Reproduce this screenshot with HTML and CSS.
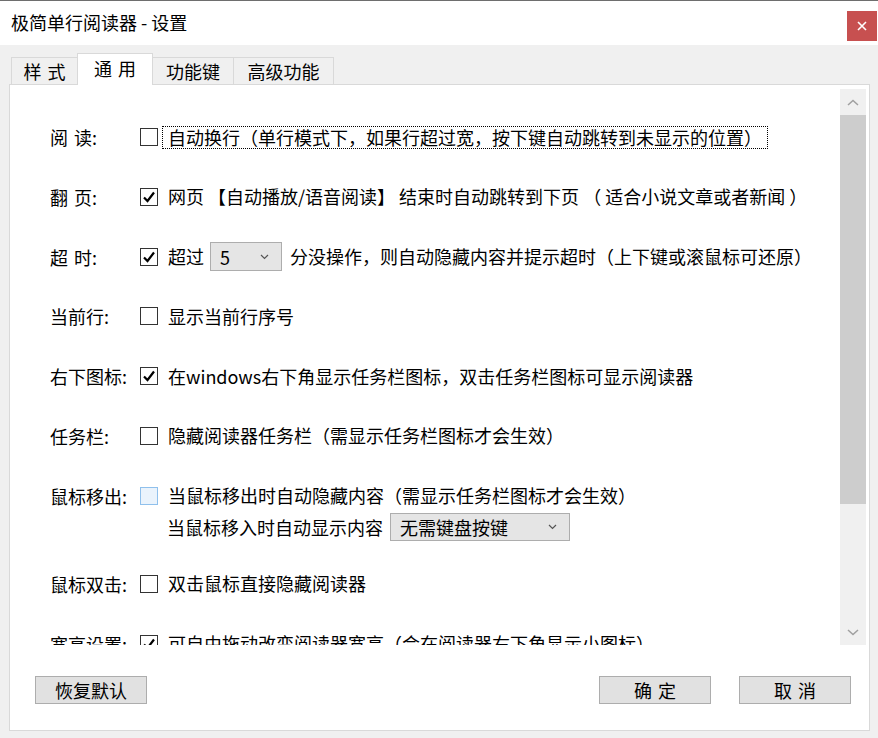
FILE: index.html
```html
<!DOCTYPE html>
<html lang="zh-CN">
<head>
    <meta charset="UTF-8">
    <meta name="viewport" content="width=device-width, initial-scale=1.0">
    <title>极简单行阅读器 - 设置</title>
    <link rel="stylesheet" href="styles.css">
</head>
<body>
    <div class="window">
        <div class="titlebar">
            <span class="title">极简单行阅读器 - 设置</span>
            <div class="close">
                <svg width="10" height="10" viewBox="0 0 10 10"><path d="M1 1 L9 9 M9 1 L1 9" stroke="#fff" stroke-width="1.6"/></svg>
            </div>
        </div>

        <div class="tabs">
            <div class="tab t1 wide">样 式</div>
            <div class="tab t2 wide active">通 用</div>
            <div class="tab t3">功能键</div>
            <div class="tab t4">高级功能</div>
        </div>

        <div class="panel">
            <div class="scroll">
                <div class="content">
                    <div class="row">
                        <span class="label wide">阅 读:</span>
                        <span class="cb"></span>
                        <span class="text focus">自动换行（单行模式下，如果行超过宽，按下键自动跳转到未显示的位置）</span>
                    </div>
                    <div class="row">
                        <span class="label wide">翻 页:</span>
                        <span class="cb"><svg width="16" height="16" viewBox="0 0 16 16"><path d="M3 8.5 L6.5 12 L13 3.5" fill="none" stroke="#000" stroke-width="2.2"/></svg></span>
                        <span class="text">网页 【自动播放/语音阅读】 结束时自动跳转到下页 （ 适合小说文章或者新闻 ）</span>
                    </div>
                    <div class="row">
                        <span class="label wide">超 时:</span>
                        <span class="cb"><svg width="16" height="16" viewBox="0 0 16 16"><path d="M3 8.5 L6.5 12 L13 3.5" fill="none" stroke="#000" stroke-width="2.2"/></svg></span>
                        <span class="text">超过<span class="select small"><span>5</span><svg width="9" height="6" viewBox="0 0 9 6"><path d="M1 1 L4.5 4.5 L8 1" fill="none" stroke="#555" stroke-width="1.2"/></svg></span>分没操作，则自动隐藏内容并提示超时（上下键或滚鼠标可还原）</span>
                    </div>
                    <div class="row">
                        <span class="label">当前行:</span>
                        <span class="cb"></span>
                        <span class="text">显示当前行序号</span>
                    </div>
                    <div class="row">
                        <span class="label">右下图标:</span>
                        <span class="cb"><svg width="16" height="16" viewBox="0 0 16 16"><path d="M3 8.5 L6.5 12 L13 3.5" fill="none" stroke="#000" stroke-width="2.2"/></svg></span>
                        <span class="text">在windows右下角显示任务栏图标，双击任务栏图标可显示阅读器</span>
                    </div>
                    <div class="row">
                        <span class="label">任务栏:</span>
                        <span class="cb"></span>
                        <span class="text">隐藏阅读器任务栏（需显示任务栏图标才会生效）</span>
                    </div>
                    <div class="row with-sub">
                        <span class="label">鼠标移出:</span>
                        <span class="cb hover"></span>
                        <span class="text">当鼠标移出时自动隐藏内容（需显示任务栏图标才会生效）</span>
                    </div>
                    <div class="subrow">
                        <span>当鼠标移入时自动显示内容</span>
                        <span class="select large"><span>无需键盘按键</span><svg width="9" height="6" viewBox="0 0 9 6"><path d="M1 1 L4.5 4.5 L8 1" fill="none" stroke="#555" stroke-width="1.2"/></svg></span>
                    </div>
                    <div class="row">
                        <span class="label">鼠标双击:</span>
                        <span class="cb"></span>
                        <span class="text">双击鼠标直接隐藏阅读器</span>
                    </div>
                    <div class="row">
                        <span class="label">宽高设置:</span>
                        <span class="cb"><svg width="16" height="16" viewBox="0 0 16 16"><path d="M3 8.5 L6.5 12 L13 3.5" fill="none" stroke="#000" stroke-width="2.2"/></svg></span>
                        <span class="text">可自由拖动改变阅读器宽高（会在阅读器右下角显示小图标）</span>
                    </div>
                </div>
                <div class="scrollbar">
                    <div class="sb-btn">
                        <svg width="12" height="7" viewBox="0 0 12 7"><path d="M1 6 L6 1.5 L11 6" fill="none" stroke="#a0a0a0" stroke-width="1.5"/></svg>
                    </div>
                    <div class="sb-thumb"></div>
                    <div class="sb-track"></div>
                    <div class="sb-btn">
                        <svg width="12" height="7" viewBox="0 0 12 7"><path d="M1 1 L6 5.5 L11 1" fill="none" stroke="#a0a0a0" stroke-width="1.5"/></svg>
                    </div>
                </div>
            </div>

            <div class="actions">
                <button class="btn">恢复默认</button>
                <div class="right">
                    <button class="btn wide">确 定</button>
                    <button class="btn wide">取 消</button>
                </div>
            </div>
        </div>
    </div>
</body>
</html>
```

FILE: styles.css
```css
body {
    margin: 0;
    padding: 0;
    font-family: "Noto Sans CJK SC", "Noto Sans", sans-serif;
    font-size: 18px;
    color: #000;
    background-color: #f0f0f0;
}
.window {
    width: 878px;
    height: 738px;
    box-sizing: border-box;
    border-top: 1px solid #6e6e6e;
    background-color: #f0f0f0;
    overflow: hidden;
}
.titlebar {
    height: 44px;
    background-color: #ffffff;
    display: flex;
    justify-content: space-between;
    align-items: flex-start;
    padding-left: 11px;
}
.title {
    line-height: 20px;
    margin-top: 11px;
}
.close {
    width: 30px;
    height: 30px;
    margin-top: 10px;
    margin-right: 1px;
    background-color: #c75050;
    display: flex;
    align-items: center;
    justify-content: center;
}
.wide {
    word-spacing: 2px;
}
.tabs {
    display: flex;
    align-items: flex-end;
    height: 31px;
    margin-top: 8px;
    padding-left: 11px;
    position: relative;
    z-index: 1;
}
.tab {
    height: 27px;
    box-sizing: border-box;
    border: 1px solid #d9d9d9;
    border-bottom: none;
    background-color: #f0f0f0;
    display: flex;
    align-items: center;
    justify-content: center;
    line-height: 20px;
    margin-right: -1px;
}
.tab.t1 { width: 67px; }
.tab.t2 { width: 76px; }
.tab.t3 { width: 82px; }
.tab.t4 { width: 101px; }
.tab.active {
    height: 32px;
    margin-bottom: -1px;
    background-color: #ffffff;
    position: relative;
    z-index: 2;
    padding-bottom: 4px;
}
.panel {
    margin-left: 9px;
    width: 861px;
    height: 647px;
    box-sizing: border-box;
    border: 1px solid #d9d9d9;
    background-color: #ffffff;
    padding: 4px 3px 0 0;
}
.scroll {
    display: flex;
    height: 556px;
}
.content {
    flex: 1;
    overflow: hidden;
    padding: 36px 0 0 40px;
}
.row {
    display: flex;
    align-items: center;
    height: 24px;
    margin-bottom: 35.8px;
    white-space: nowrap;
}
.row.with-sub {
    margin-bottom: 5px;
}
.label {
    width: 90px;
    flex-shrink: 0;
    line-height: 24px;
}
.cb {
    width: 18px;
    height: 18px;
    box-sizing: border-box;
    border: 1px solid #333333;
    background-color: #ffffff;
    margin-right: 4px;
    flex-shrink: 0;
    display: flex;
    align-items: center;
    justify-content: center;
}
.cb.hover {
    border-color: #8fc0ec;
    background-color: #eaf3fc;
}
.text {
    display: flex;
    align-items: center;
    border: 1px dotted transparent;
    padding: 0 5px;
    line-height: 21px;
}
.text.focus {
    border-color: #000;
}
.select {
    display: flex;
    align-items: center;
    justify-content: space-between;
    box-sizing: border-box;
    border: 1px solid #adadad;
    background-color: #e5e5e5;
    line-height: 20px;
}
.select.small {
    width: 72px;
    height: 29px;
    margin: 0 8px 0 6px;
    padding: 0 12px 0 9px;
}
.select.large {
    width: 180px;
    height: 28px;
    margin-left: 7px;
    padding: 0 12px 0 9px;
}
.subrow {
    display: flex;
    align-items: center;
    height: 28px;
    margin-bottom: 31px;
    padding-left: 117px;
    white-space: nowrap;
}
.scrollbar {
    width: 26px;
    background-color: #f0f0f0;
    display: flex;
    flex-direction: column;
}
.sb-btn {
    height: 26px;
    display: flex;
    align-items: center;
    justify-content: center;
}
.sb-thumb {
    height: 389px;
    background-color: #cdcdcd;
}
.sb-track {
    flex: 1;
}
.actions {
    display: flex;
    justify-content: space-between;
    margin-top: 31px;
    padding: 0 15px 0 25px;
}
.right {
    display: flex;
    gap: 28px;
}
.btn {
    width: 112px;
    height: 28px;
    box-sizing: border-box;
    border: 1px solid #adadad;
    background-color: #e1e1e1;
    font-family: "Noto Sans CJK SC", "Noto Sans", sans-serif;
    font-size: 18px;
    line-height: 20px;
    color: #000;
    padding: 0;
}
```
